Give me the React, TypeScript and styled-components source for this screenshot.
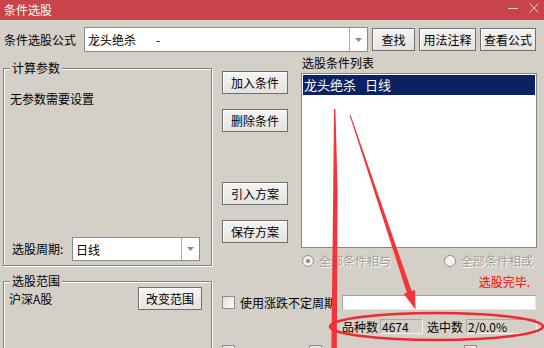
import React from "react";
import styled, { createGlobalStyle } from "styled-components";

const Global = createGlobalStyle`
  html, body { margin: 0; padding: 0; background: #d4d0c8; }
  body {
    font-family: "Noto Sans CJK SC", "Noto Sans", sans-serif;
    font-size: 12px;
    color: #000;
  }
  * { box-sizing: border-box; }
`;

const Window = styled.div`
  position: relative;
  width: 544px;
  height: 348px;
  overflow: hidden;
  background: #d4d0c8;
  display: flex;
  flex-direction: column;
`;

const TitleBar = styled.div`
  flex: none;
  height: 20px;
  background: #c8434a;
  color: #fff;
  display: flex;
  align-items: center;
  padding-left: 4px;
  line-height: 20px;
`;

const TitleText = styled.span`
  flex: 1;
`;

const TitleControls = styled.div`
  display: flex;
  align-items: center;
  gap: 10px;
  padding-right: 5px;
  margin-top: -5px;
`;

const TopRow = styled.div`
  flex: none;
  display: flex;
  align-items: center;
  height: 25px;
  margin-top: 7px;
  padding-left: 4px;
`;

const FieldLabel = styled.span<{ $w: number }>`
  flex: none;
  width: ${(p) => p.$w}px;
  line-height: 16px;
  white-space: nowrap;
`;

const Combo = styled.div<{ $w: number; $h: number }>`
  flex: none;
  width: ${(p) => p.$w}px;
  height: ${(p) => p.$h}px;
  background: #fff;
  border: 1px solid #8a8a8a;
  display: flex;
  align-items: stretch;
`;

const ComboText = styled.div`
  flex: 1;
  padding-left: 3px;
  display: flex;
  align-items: center;
  white-space: nowrap;
`;

const Dash = styled.span`
  margin-left: 20px;
`;

const ComboArrow = styled.div`
  flex: none;
  width: 18px;
  border-left: 1px solid #a8a8a8;
  display: flex;
  align-items: center;
  justify-content: center;
`;

const Btn = styled.button<{ $w: number; $ml?: number }>`
  flex: none;
  width: ${(p) => p.$w}px;
  height: 23px;
  margin-left: ${(p) => p.$ml ?? 0}px;
  padding: 0;
  font: inherit;
  font-size: 12px;
  line-height: 21px;
  color: #000;
  background: linear-gradient(#f4f4f4, #e4e3e0);
  border: 1px solid #6f6f6f;
  border-radius: 0;
  box-shadow: inset 1px 1px 0 #fff;
  text-align: center;
  white-space: nowrap;
`;

const Main = styled.div`
  flex: none;
  display: flex;
  align-items: flex-start;
  margin-top: 4px;
`;

const LeftCol = styled.div`
  flex: none;
  display: flex;
  flex-direction: column;
  margin-left: 3px;
  padding-top: 12px;
`;

const Group = styled.div<{ $h: number; $mt?: number }>`
  position: relative;
  width: 209px;
  height: ${(p) => p.$h}px;
  margin-top: ${(p) => p.$mt ?? 0}px;
  border: 1px solid #808080;
  box-shadow: 1px 1px 0 #fff, inset 1px 1px 0 #fff;
`;

const Legend = styled.span`
  position: absolute;
  top: -9px;
  left: 6px;
  padding: 0 2px;
  background: #d4d0c8;
  line-height: 16px;
`;

const ParamBody = styled.div`
  height: 100%;
  display: flex;
  flex-direction: column;
  justify-content: space-between;
  padding: 22px 6px 4px 6px;
`;

const PlainText = styled.div`
  line-height: 16px;
`;

const PeriodRow = styled.div`
  display: flex;
  align-items: center;
  padding-left: 2px;
`;

const RangeBody = styled.div`
  display: flex;
  justify-content: space-between;
  align-items: flex-start;
  padding: 5px 9px 0 5px;
`;

const RangeText = styled.span`
  margin-top: 4px;
  line-height: 16px;
`;

const RightArea = styled.div`
  flex: none;
  width: 314px;
  margin-left: 10px;
  display: flex;
  flex-direction: column;
`;

const UpperRow = styled.div`
  display: flex;
  align-items: flex-start;
`;

const ButtonCol = styled.div`
  flex: none;
  width: 66px;
  display: flex;
  flex-direction: column;
  padding-top: 15px;
`;

const ColBtn = styled(Btn)<{ $mt: number }>`
  margin-top: ${(p) => p.$mt}px;
`;

const ListCol = styled.div`
  flex: none;
  width: 236px;
  margin-left: 13px;
  display: flex;
  flex-direction: column;
`;

const ListLabel = styled.div`
  height: 14px;
  line-height: 14px;
  padding-left: 1px;
  margin-bottom: 3px;
`;

const ListBox = styled.div`
  height: 175px;
  background: #fff;
  border: 1px solid #858585;
  padding: 1px;
`;

const SelRow = styled.div`
  height: 20px;
  line-height: 20px;
  padding-left: 1px;
  background: #0a2164;
  color: #fff;
  font-size: 13px;
  display: flex;
`;

const Gap = styled.span<{ $w: number }>`
  margin-left: ${(p) => p.$w}px;
`;

const RadioRow = styled.div`
  display: flex;
  justify-content: space-between;
  align-items: center;
  height: 14px;
  margin-top: 6px;
  padding-left: 80px;
  padding-right: 3px;
`;

const RadioItem = styled.label`
  display: flex;
  align-items: center;
  gap: 5px;
  color: #a19e98;
  text-shadow: 1px 1px 0 #fff;
  line-height: 14px;
`;

const RadioDot = styled.span<{ $on?: boolean }>`
  flex: none;
  width: 12px;
  height: 12px;
  border-radius: 50%;
  border: 1px solid #8c8c8c;
  background: #f2f2f2;
  display: flex;
  align-items: center;
  justify-content: center;
  &::after {
    content: "";
    width: 4px;
    height: 4px;
    border-radius: 50%;
    background: ${(p) => (p.$on ? "#8a8a8a" : "transparent")};
  }
`;

const Status = styled.div`
  height: 14px;
  line-height: 14px;
  margin-top: 7px;
  padding-right: 6px;
  text-align: right;
  color: #ff0000;
`;

const CheckRow = styled.div`
  display: flex;
  align-items: center;
  height: 15px;
  margin-top: 6px;
`;

const CheckBox = styled.span<{ $ml?: number }>`
  flex: none;
  width: 13px;
  height: 13px;
  margin-left: ${(p) => p.$ml ?? 0}px;
  border: 1px solid #8f8f8f;
  background: linear-gradient(135deg, #dedede, #fbfbfb);
`;

const CheckLabel = styled.span`
  flex: none;
  width: 102px;
  margin-left: 5px;
  line-height: 15px;
  white-space: nowrap;
`;

const WhiteBox = styled.div`
  flex: 1;
  height: 15px;
  background: #fff;
  border: 1px solid #a0a0a0;
  border-right-color: #e6e6e6;
  border-bottom-color: #e6e6e6;
`;

const CountRow = styled.div`
  display: flex;
  align-items: center;
  height: 15px;
  margin-top: 9px;
  padding-left: 120px;
`;

const CountLabel = styled.span<{ $w: number; $ml?: number }>`
  flex: none;
  width: ${(p) => p.$w}px;
  margin-left: ${(p) => p.$ml ?? 0}px;
  line-height: 15px;
  white-space: nowrap;
`;

const ReadBox = styled.div<{ $w: number }>`
  flex: none;
  width: ${(p) => p.$w}px;
  height: 15px;
  line-height: 13px;
  padding-left: 1px;
  border: 1px solid #a8a8a8;
  border-right-color: #f4f4f4;
  border-bottom-color: #f4f4f4;
  background: #d4d0c8;
  white-space: nowrap;
`;

const BottomRow = styled.div`
  display: flex;
  margin-top: 11px;
`;

const Overlay = styled.svg`
  position: absolute;
  left: 0;
  top: 0;
  pointer-events: none;
`;

const Caret = () => (
  <svg width="7" height="4" viewBox="0 0 7 4">
    <path d="M0 0 H7 L3.5 4 Z" fill="#8c8c8c" />
  </svg>
);

export default function App() {
  return (
    <>
      <Global />
      <Window>
        <TitleBar>
          <TitleText>条件选股</TitleText>
          <TitleControls>
            <svg width="11" height="10" viewBox="0 0 11 10">
              <path d="M0 5.5 H10" stroke="#f2c9cb" strokeWidth="1" />
            </svg>
            <svg width="10" height="10" viewBox="0 0 10 10">
              <path d="M0.5 0.5 L9.5 9.5 M9.5 0.5 L0.5 9.5" stroke="#f2c9cb" strokeWidth="1" />
            </svg>
          </TitleControls>
        </TitleBar>

        <TopRow>
          <FieldLabel $w={80}>条件选股公式</FieldLabel>
          <Combo $w={284} $h={25}>
            <ComboText>
              龙头绝杀<Dash>-</Dash>
            </ComboText>
            <ComboArrow>
              <Caret />
            </ComboArrow>
          </Combo>
          <Btn $w={43} $ml={4}>查找</Btn>
          <Btn $w={57} $ml={4}>用法注释</Btn>
          <Btn $w={56} $ml={4}>查看公式</Btn>
        </TopRow>

        <Main>
          <LeftCol>
            <Group $h={198}>
              <Legend>计算参数</Legend>
              <ParamBody>
                <PlainText>无参数需要设置</PlainText>
                <PeriodRow>
                  <FieldLabel $w={60}>选股周期:</FieldLabel>
                  <Combo $w={128} $h={24}>
                    <ComboText>日线</ComboText>
                    <ComboArrow>
                      <Caret />
                    </ComboArrow>
                  </Combo>
                </PeriodRow>
              </ParamBody>
            </Group>
            <Group $h={100} $mt={15}>
              <Legend>选股范围</Legend>
              <RangeBody>
                <RangeText>沪深A股</RangeText>
                <Btn $w={64}>改变范围</Btn>
              </RangeBody>
            </Group>
          </LeftCol>

          <RightArea>
            <UpperRow>
              <ButtonCol>
                <ColBtn $w={66} $mt={0}>加入条件</ColBtn>
                <ColBtn $w={66} $mt={15}>删除条件</ColBtn>
                <ColBtn $w={66} $mt={50}>引入方案</ColBtn>
                <ColBtn $w={66} $mt={15}>保存方案</ColBtn>
              </ButtonCol>
              <ListCol>
                <ListLabel>选股条件列表</ListLabel>
                <ListBox>
                  <SelRow>
                    <span>龙头绝杀</span>
                    <Gap $w={9}>日线</Gap>
                  </SelRow>
                </ListBox>
              </ListCol>
            </UpperRow>

            <RadioRow>
              <RadioItem>
                <RadioDot $on />
                全部条件相与
              </RadioItem>
              <RadioItem>
                <RadioDot />
                全部条件相或
              </RadioItem>
            </RadioRow>

            <Status>选股完毕.</Status>

            <CheckRow>
              <CheckBox />
              <CheckLabel>使用涨跌不定周期</CheckLabel>
              <WhiteBox />
            </CheckRow>

            <CountRow>
              <CountLabel $w={38}>品种数</CountLabel>
              <ReadBox $w={43}>4674</ReadBox>
              <CountLabel $w={39} $ml={4}>选中数</CountLabel>
              <ReadBox $w={71}>2/0.0%</ReadBox>
            </CountRow>

            <BottomRow>
              <CheckBox />
              <CheckBox $ml={74} />
              <CheckBox $ml={142} />
            </BottomRow>
          </RightArea>
        </Main>

        <Overlay width="544" height="348" viewBox="0 0 544 348">
          <polygon
            points="334,109 335.4,109 337.6,190 336.8,348 331.4,348 333.2,190"
            fill="#f2343b"
          />
          <polygon
            points="349.6,115.2 406.9,292.7 403.6,293.8 415.5,309.5 415,290 411.7,291.1 350.5,114.8"
            fill="#f2343b"
          />
          <ellipse
            cx="436.5"
            cy="326.5"
            rx="106.5"
            ry="13.5"
            fill="none"
            stroke="#ec2a31"
            strokeWidth="2.6"
          />
        </Overlay>
      </Window>
    </>
  );
}
